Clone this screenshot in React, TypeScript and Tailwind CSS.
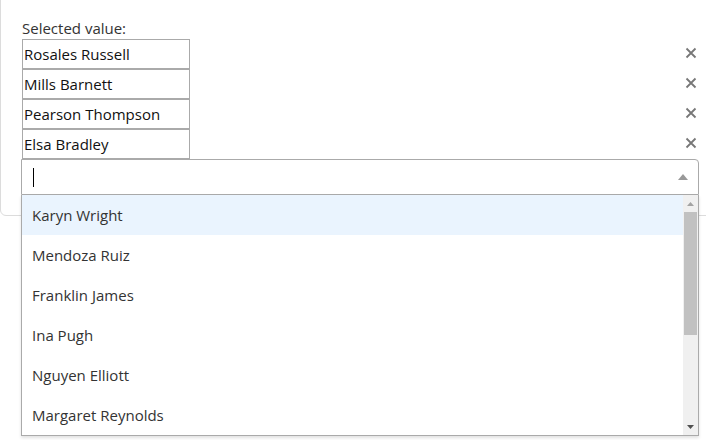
import React from "react";

const selected = ["Rosales Russell", "Mills Barnett", "Pearson Thompson", "Elsa Bradley"];

const options = [
  "Karyn Wright",
  "Mendoza Ruiz",
  "Franklin James",
  "Ina Pugh",
  "Nguyen Elliott",
  "Margaret Reynolds",
];

const CloseIcon = () => (
  <svg width="12" height="12" viewBox="0 0 12 12" className="text-[#777]">
    <path d="M1.5 1.5 L10.5 10.5 M10.5 1.5 L1.5 10.5" stroke="currentColor" strokeWidth="1.8" />
  </svg>
);

export default function App() {
  return (
    <div
      className="relative w-[706px] h-[440px] overflow-hidden bg-white text-[#333]"
      style={{ fontFamily: '"Segoe UI", "Open Sans", "Noto Sans", sans-serif' }}
    >
      {/* background card */}
      <div className="-mt-4 w-[740px] h-[232px] border border-[#dcdcdc] rounded-md pl-[21px] pt-[33px] pr-[41px]">
        <div className="text-[15px] leading-[20px] text-[#333]">Selected value:</div>
        <div className="flex flex-col">
          {selected.map((name) => (
            <div key={name} className="flex items-center justify-between h-[30px]">
              <div className="w-[168px] h-[30px] -mb-px border border-[#aaa] pl-[1px] text-[15px] leading-[28px] text-[#111]">
                {name}
              </div>
              <div className="mr-[1px]">
                <CloseIcon />
              </div>
            </div>
          ))}
        </div>
      </div>

      {/* dropdown */}
      <div className="absolute left-[21px] top-[159px] w-[678px]">
        <div className="h-[36px] border border-[#aaa] rounded-tr-[4px] bg-white flex items-center justify-between pl-[11px] pr-[10px]">
          <div className="w-px h-[19px] bg-black" />
          <svg width="10" height="6" viewBox="0 0 10 6">
            <path d="M0 6 L5 0 L10 6 Z" fill="#999" />
          </svg>
        </div>
        <div className="flex h-[241px] border border-t-0 border-[#aaa] bg-white shadow-[0_2px_3px_rgba(0,0,0,0.12)]">
          <div className="flex-1 flex flex-col">
            {options.map((o, i) => (
              <div
                key={o}
                className={`h-[40px] shrink-0 flex items-center pl-[10px] pt-px text-[15px] text-[#333] ${i === 0 ? "bg-[#eaf4fe]" : ""}`}
              >
                {o}
              </div>
            ))}
          </div>
          <div className="w-[15px] bg-[#f0f0f0] flex flex-col items-center">
            <div className="h-[17px] flex items-center justify-center">
              <svg width="7" height="4" viewBox="0 0 7 4">
                <path d="M0 4 L3.5 0 L7 4 Z" fill="#a3a3a3" />
              </svg>
            </div>
            <div className="w-[13px] h-[123px] bg-[#c1c1c1]" />
            <div className="flex-1" />
            <div className="h-[17px] flex items-center justify-center">
              <svg width="7" height="4" viewBox="0 0 7 4">
                <path d="M0 0 L7 0 L3.5 4 Z" fill="#505050" />
              </svg>
            </div>
          </div>
        </div>
      </div>
    </div>
  );
}
